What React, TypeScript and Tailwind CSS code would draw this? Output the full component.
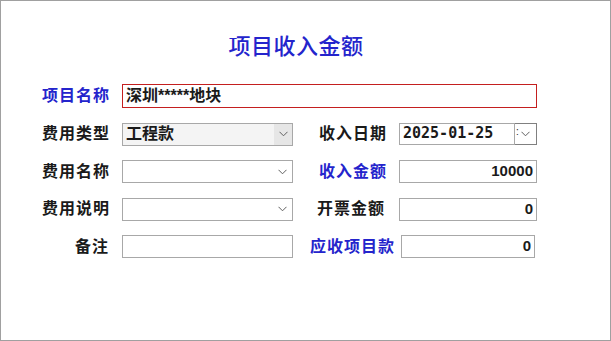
import React from "react";

const font = { fontFamily: '"Liberation Sans", "Noto Sans CJK SC", sans-serif' };

function Chevron({ className = "" }: { className?: string }) {
  return (
    <svg width="9" height="6" viewBox="0 0 9 6" className={className}>
      <path d="M0.5 0.8 L4.5 4.8 L8.5 0.8" fill="none" stroke="#606060" strokeWidth="1" />
    </svg>
  );
}

function Label({ text, blue = false, cls = "" }: { text: string; blue?: boolean; cls?: string }) {
  return (
    <div
      className={`flex items-center justify-end whitespace-nowrap text-[16px] font-bold tracking-[1px] ${
        blue ? "text-[#2424cc]" : "text-[#1a1a1a]"
      } ${cls}`}
    >
      {text}
    </div>
  );
}

function Box({ children, cls = "" }: { children?: React.ReactNode; cls?: string }) {
  return <div className={`flex h-[23px] items-center border border-[#a8a8a8] bg-white ${cls}`}>{children}</div>;
}

export default function App() {
  return (
    <div style={font} className="h-[341px] w-[611px] border border-[#a0a0a0] bg-white">
      <div className="w-[590px] pt-[29px] text-center text-[22px] font-medium tracking-[0.5px] text-[#2424cc]">
        项目收入金额
      </div>
      <div className="ml-[29px] mt-[21px] grid grid-cols-[80px_171px_82px_138px] grid-rows-[24px_23px_23px_23px_23px] gap-x-[12px] gap-y-[14.5px]">
        <Label text="项目名称" blue />
        <div className="col-span-3 flex items-center border border-[#c41f1f] pl-[3px] text-[16px] font-bold text-[#1a1a1a]">
          深圳*****地块
        </div>

        <Label text="费用类型" />
        <div className="flex h-[23px] items-center border border-[#a8a8a8] bg-[#f4f4f4]">
          <div className="flex-1 pl-[3px] text-[16px] font-bold text-[#1a1a1a]">工程款</div>
          <div className="flex h-full w-[18px] items-center justify-center bg-[#e6e6e6]">
            <Chevron />
          </div>
        </div>
        <Label text="收入日期" />
        <div className="flex h-[22px] items-stretch">
          <div
            style={{ fontFamily: '"DejaVu Sans Mono", monospace' }}
            className="flex w-[116px] items-center border border-[#a8a8a8] pl-[3px] text-[15px] font-bold text-[#1a1a1a]"
          >
            2025-01-25
          </div>
          <div className="relative flex w-[22px] items-center justify-center border border-l-0 border-[#808080] bg-white">
            <span className="absolute left-[1px] top-[3px] text-[10px] leading-none text-[#222]">:</span>
            <Chevron />
          </div>
        </div>

        <Label text="费用名称" />
        <Box cls="justify-end pr-[5px]">
          <Chevron />
        </Box>
        <Label text="收入金额" blue />
        <Box cls="justify-end pr-[3px] text-[15px] font-bold text-[#1a1a1a]">10000</Box>

        <Label text="费用说明" />
        <Box cls="justify-end pr-[5px]">
          <Chevron />
        </Box>
        <Label text="开票金额" cls="pr-[2px]" />
        <Box cls="justify-end pr-[3px] text-[15px] font-bold text-[#1a1a1a]">0</Box>

        <Label text="备注" cls="pr-[1px]" />
        <Box />
        <Label text="应收项目款" blue cls="-mr-[8px]" />
        <Box cls="ml-[2px] mr-[2px] justify-end pr-[3px] text-[15px] font-bold text-[#1a1a1a]">0</Box>
      </div>
    </div>
  );
}
